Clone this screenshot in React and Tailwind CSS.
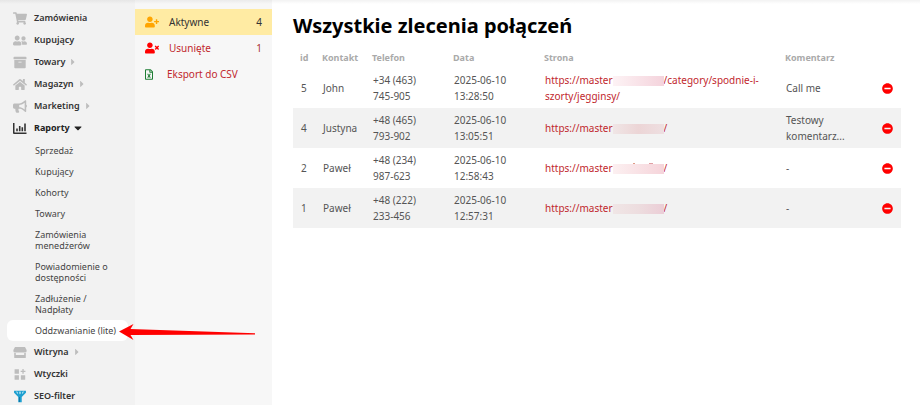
import React from "react";
import {
  FaShoppingCart,
  FaUserFriends,
  FaArchive,
  FaHome,
  FaBullhorn,
  FaUserPlus,
  FaUserTimes,
  FaRegFileExcel,
  FaMinusCircle,
  FaCaretRight,
  FaCaretDown,
} from "react-icons/fa";

const ReportsIcon = (props) => (
  <svg viewBox="0 0 14 12" fill="currentColor" {...props}>
    <path d="M0 0.5h1.5v9.5H13.5v1.5H1A1 1 0 0 1 0 10.5z" />
    <path d="M3.2 6h1.6v2.8H3.2zM5.9 3.5h1.6v5.3H5.9zM8.5 4.8h1.6v4H8.5zM11.2 1h1.6v7.8h-1.6z" />
  </svg>
);

const ShopIcon = (props) => (
  <svg viewBox="0 0 14 12" fill="currentColor" {...props}>
    <path d="M2 0.5h10L13.6 3.6v1.1a1.5 1.5 0 0 1-1.5 1.4H1.9A1.5 1.5 0 0 1 .4 4.7V3.6z" />
    <path d="M1.2 6.6h1.6v2h8.4v-2h1.6v4.3a.7.7 0 0 1-.7.7H1.9a.7.7 0 0 1-.7-.7z" />
  </svg>
);

const PluginsIcon = (props) => (
  <svg viewBox="0 0 12 12" fill="currentColor" {...props}>
    <path d="M1 1.2h4v4H1zM1 6.8h4v4H1zM6.8 6.8h4v4h-4zM8.2 1h1.2v1.6H11v1.2H9.4v1.6H8.2V3.8H6.6V2.6h1.6z" />
  </svg>
);

const SeoIcon = (props) => (
  <svg viewBox="0 0 12 12" {...props}>
    <path d="M0.5 0.8h11v1.8L7.6 6.4v4.8H4.4V6.4L.5 2.6z" fill="#1d9fd0" />
    <path d="M2.4 1.4h1l.8 1.4-.6.8zM5.6 1.4h.8l.4 1.4-.8 1.4-.8-1.4zM8.6 1.4h1L8.4 3.6l-.6-.8z" fill="#bfe8f5" />
    <path d="M5 6.5h.8v4.6H5z" fill="#0d6e9c" />
  </svg>
);

const mainItems = [
  { label: "Zamówienia", icon: FaShoppingCart },
  { label: "Kupujący", icon: FaUserFriends },
  { label: "Towary", icon: FaArchive, nested: true },
  { label: "Magazyn", icon: FaHome, nested: true },
  { label: "Marketing", icon: FaBullhorn, nested: true },
  { label: "Raporty", icon: ReportsIcon, open: true },
];

const reportItems = [
  "Sprzedaż",
  "Kupujący",
  "Kohorty",
  "Towary",
  "Zamówienia menedżerów",
  "Powiadomienie o dostępności",
  "Zadłużenie / Nadpłaty",
  "Oddzwanianie (lite)",
];

const bottomItems = [
  { label: "Witryna", icon: ShopIcon, nested: true },
  { label: "Wtyczki", icon: PluginsIcon },
  { label: "SEO-filter", icon: SeoIcon },
];

const requests = [
  {
    id: 5,
    name: "John",
    phone: "+34 (463) 745-905",
    date: "2025-06-10 13:28:50",
    path: "/category/spodnie-i-szorty/jegginsy/",
    comment: "Call me",
    mask: "from-[#fdf3f5] to-[#f4d3dc]",
  },
  {
    id: 4,
    name: "Justyna",
    phone: "+48 (465) 793-902",
    date: "2025-06-10 13:05:51",
    path: "/",
    comment: "Testowy komentarz...",
    mask: "from-[#f0e6e6] via-[#ecd5d6] to-[#eedfe1]",
  },
  {
    id: 2,
    name: "Paweł",
    phone: "+48 (234) 987-623",
    date: "2025-06-10 12:58:43",
    path: "/",
    comment: "-",
    mask: "from-[#fcf0f1] to-[#f5d4da]",
    peek: true,
  },
  {
    id: 1,
    name: "Paweł",
    phone: "+48 (222) 233-456",
    date: "2025-06-10 12:57:31",
    path: "/",
    comment: "-",
    mask: "from-[#f0e6e6] via-[#eddddf] to-[#ebcdd6]",
  },
];

function MenuItem({ item }) {
  const Icon = item.icon;
  return (
    <li>
      <a
        href="#"
        className={`flex items-center h-[22px] pl-3 text-[9px] leading-[14px] ${
          item.open ? "font-bold text-[#222]" : "font-semibold text-[#333]"
        }`}
      >
        <span
          className={`flex justify-center w-4 mr-1.5 ${
            item.open ? "text-[#333]" : "text-[#bdbdbd]"
          }`}
        >
          <Icon className="h-[13px] w-3.5" />
        </span>
        {item.label}
        {item.nested && <FaCaretRight className="ml-1 h-2.5 w-2 text-[#bdbdbd]" />}
        {item.open && <FaCaretDown className="ml-1 h-3 w-2" />}
      </a>
    </li>
  );
}

function Sidebar() {
  return (
    <nav className="w-[135px] shrink-0 bg-[#f2f2f2] pt-[7px]">
      <ul>
        {mainItems.map((item) => (
          <MenuItem key={item.label} item={item} />
        ))}
      </ul>
      <ul className="pt-px px-[7px]">
        {reportItems.map((label) => {
          const active = label === "Oddzwanianie (lite)";
          return (
            <li key={label}>
              <a
                href="#"
                className={`block rounded-md py-[5px] pl-7 text-[9px] leading-[11px] text-[#444] ${
                  active ? "bg-white" : "pr-3"
                }`}
              >
                {label}
              </a>
            </li>
          );
        })}
      </ul>
      <ul>
        {bottomItems.map((item) => (
          <MenuItem key={item.label} item={item} />
        ))}
      </ul>
    </nav>
  );
}

function Filters() {
  return (
    <aside className="w-[137px] shrink-0 bg-[#f7f7f7] pt-[9px] text-[10px] leading-4 text-[#c1272d]">
      <a href="#" className="flex items-center h-[26px] px-2.5 bg-[#ffeba3] text-[#333]">
        <FaUserPlus className="w-3.5 h-3.5 mr-2.5 text-[#ffa500]" />
        <span className="flex-1">Aktywne</span>
        <span>4</span>
      </a>
      <a href="#" className="flex items-center h-[26px] px-2.5">
        <FaUserTimes className="w-3.5 h-3.5 mr-2.5 text-[#ff0000]" />
        <span className="flex-1">Usunięte</span>
        <span className="text-[#a33]">1</span>
      </a>
      <a href="#" className="flex items-center h-[26px] px-2.5">
        <FaRegFileExcel className="w-2 h-[11px] mr-3.5 text-[#1e7e34]" />
        <span>Eksport do CSV</span>
      </a>
    </aside>
  );
}

function RequestsTable() {
  return (
    <table className="w-full table-fixed text-left text-[10px] leading-4 text-[#555]">
      <colgroup>
        <col className="w-[22px]" />
        <col className="w-[50px]" />
        <col className="w-[81px]" />
        <col className="w-[91px]" />
        <col />
        <col className="w-[90px]" />
        <col className="w-[33px]" />
      </colgroup>
      <thead>
        <tr className="h-5 text-[9px] text-[#aaa]">
          <th className="pl-[7px] font-bold">id</th>
          <th className="pl-[7px] font-bold">Kontakt</th>
          <th className="pl-[7px] font-bold">Telefon</th>
          <th className="pl-[7px] font-bold">Data</th>
          <th className="pl-[7px] font-bold">Strona</th>
          <th className="pl-[7px] font-bold">Komentarz</th>
          <th></th>
        </tr>
      </thead>
      <tbody>
        {requests.map((row) => (
          <tr key={row.id} className="h-10 even:bg-[#f2f2f2]">
            <td className="pl-2">{row.id}</td>
            <td className="pl-2">{row.name}</td>
            <td className="pl-2 pr-4">{row.phone}</td>
            <td className="pl-2 pr-4">{row.date}</td>
            <td className="pl-2 pr-2">
              <a href="#" className="text-[#c1272d]">
                https://master
                <span
                  className={`relative inline-block align-middle w-[51px] h-2.5 bg-linear-to-r ${row.mask}`}
                >
                  {row.peek && (
                    <>
                      <i className="absolute -top-px left-5 w-0.5 h-px bg-[#e09a86]" />
                      <i className="absolute -top-px left-9 w-1 h-px bg-[#e0a0a4]" />
                    </>
                  )}
                </span>
                {row.path}
              </a>
            </td>
            <td className="pl-2 pr-4">{row.comment}</td>
            <td className="pr-2">
              <button type="button" aria-label="Usuń" className="block ml-auto text-[#ff0000]">
                <FaMinusCircle className="h-[11px] w-[11px]" />
              </button>
            </td>
          </tr>
        ))}
      </tbody>
    </table>
  );
}

export default function App() {
  return (
    <div className="relative flex h-screen overflow-hidden bg-white font-['Noto_Sans','Open_Sans',sans-serif]">
      <Sidebar />
      <Filters />
      <main className="flex-1 min-w-0 pl-[21px] pr-[19px] pt-3">
        <h1 className="mb-2 text-[20px] leading-7 font-bold text-black">
          Wszystkie zlecenia połączeń
        </h1>
        <RequestsTable />
      </main>

      {/* Shadow under the top bar */}
      <div className="absolute inset-x-0 top-0 h-1 bg-linear-to-b from-black/5 to-transparent" />

      {/* Pointer to the active report */}
      <svg
        viewBox="0 0 136 18"
        className="absolute left-[119px] top-[323px] w-[136px] h-[18px]"
        fill="#ff0000"
      >
        <path d="M0 8.5 L14.5 1 L11.5 6 L136 10.3 V11.6 L11.5 12 L14.5 17z" />
      </svg>
    </div>
  );
}
